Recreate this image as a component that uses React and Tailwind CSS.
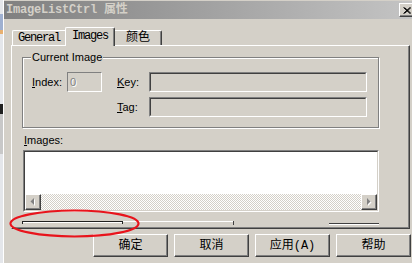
import React from 'react';

const ui = "font-['Liberation_Sans','Noto_Sans_CJK_SC',sans-serif]";
const mono = "font-['Liberation_Mono','Noto_Sans_CJK_SC',monospace]";

const Raised = ({ className = '', children }) => (
  <div className={`border border-t-white border-l-white border-r-[#404040] border-b-[#404040] shadow-[inset_-1px_-1px_0_#808080] ${className}`}>
    {children}
  </div>
);

const Sunken = ({ className = '', inner = 'bg-[#d4d0c8]', children }) => (
  <div className={`border border-t-[#808080] border-l-[#808080] border-r-white border-b-white ${className}`}>
    <div className={`h-full w-full border border-t-[#404040] border-l-[#404040] border-r-[#d4d0c8] border-b-[#d4d0c8] ${inner}`}>
      {children}
    </div>
  </div>
);

const Arrow = ({ dir }) => (
  <Raised className="w-[16px] h-[16px] bg-[#d4d0c8] flex items-center justify-center">
    <svg width="8" height="8" viewBox="0 0 8 8">
      {dir === 'left' ? (
        <>
          <polygon points="6,1 6,8 2.5,4.5" fill="#ffffff" />
          <polygon points="5,0 5,7 1.5,3.5" fill="#808080" />
        </>
      ) : (
        <>
          <polygon points="3,1 3,8 6.5,4.5" fill="#ffffff" />
          <polygon points="2,0 2,7 5.5,3.5" fill="#808080" />
        </>
      )}
    </svg>
  </Raised>
);

const Btn = ({ children }) => (
  <Raised className={`w-[75px] h-[23px] bg-[#d4d0c8] flex items-center justify-center text-[12px] text-black ${mono}`}>
    {children}
  </Raised>
);

const App = () => {
  return (
    <div className={`relative w-[412px] h-[263px] overflow-hidden bg-[#d4d0c8] flex ${ui}`}>
      {/* desktop behind the window */}
      <div className="w-[3px] h-full flex flex-col bg-[#e4e6ea]">
        <div className="h-[14px]" />
        <div className="h-[16px] bg-[#9fb0d0]" />
        <div className="h-[4px] bg-[#e8b070]" />
        <div className="h-[70px]" />
        <div className="h-[10px] bg-[#202020]" />
        <div className="h-[40px] bg-[#c8c8c8]" />
      </div>

      <div className="flex-1 flex flex-col border-l border-l-white">
        {/* title bar */}
        <div className="mt-[1px] h-[18px] flex items-center justify-between bg-gradient-to-r from-[#808080] to-[#c4c4c4]">
          <span className={`pl-[2px] text-[12px] font-bold text-[#d4d0c8] tracking-[-0.2px] ${mono}`}>
            ImageListCtrl 属性
          </span>
          <Raised className="w-[16px] h-[14px] bg-[#d4d0c8] flex items-center justify-center -mr-[3px]">
            <svg width="8" height="7" viewBox="0 0 8 7">
              <path d="M0.5 0.5 L7 6.5 M1.5 0.5 L8 6.5 M7 0.5 L0.5 6.5 M8 0.5 L1.5 6.5" stroke="#000" strokeWidth="1" />
            </svg>
          </Raised>
        </div>

        {/* tabs */}
        <div className="mt-[8px] h-[18px] pl-[8px] flex items-end">
          <div className={`w-[53px] h-[15px] border-t border-l border-t-white border-l-white rounded-tl-[2px] flex items-center justify-center text-[12px] tracking-[-1.2px] ${mono}`}>
            General
          </div>
          <div className={`relative z-10 -mb-[1px] w-[50px] h-[19px] bg-[#d4d0c8] border-t border-l border-r border-t-white border-l-white border-r-[#404040] shadow-[inset_-1px_0_0_#808080] rounded-t-[2px] flex items-center justify-center pb-[2px] text-[12px] tracking-[-1.2px] ${mono}`}>
            Images
          </div>
          <div className={`w-[47px] h-[15px] border-t border-r border-t-white border-r-[#404040] shadow-[inset_-1px_0_0_#808080] rounded-tr-[2px] flex items-center justify-center text-[12px] ${mono}`}>
            颜色
          </div>
        </div>

        {/* tab page */}
        <div className="ml-[7px] w-[399px] h-[184px] flex flex-col border border-t-white border-l-white border-r-[#404040] border-b-[#404040] shadow-[inset_-1px_-1px_0_#808080] pl-[10px] pt-[11px]">
          {/* group box */}
          <div className="relative w-[357px] h-[71px] border border-[#808080] shadow-[inset_1px_1px_0_#fff,1px_1px_0_#fff] shrink-0">
            <span className="absolute left-[8px] -top-[7px] bg-[#d4d0c8] px-[1px] text-[11px] leading-[13px] text-black">
              Current Image
            </span>
            <div className="flex flex-col gap-[5px] pl-[9px] pt-[14px]">
              <div className="flex items-center h-[20px]">
                <span className="w-[35px] text-[11px] text-black"><u>I</u>ndex:</span>
                <div className="w-[35px] h-[20px] border border-t-[#808080] border-l-[#808080] border-r-white border-b-white flex items-center pl-[2px] text-[11px] text-[#808080] [text-shadow:1px_1px_0_#fff]">
                  0
                </div>
                <span className="ml-[15px] w-[32px] text-[11px] text-black"><u>K</u>ey:</span>
                <Sunken className="w-[218px] h-[20px]" />
              </div>
              <div className="flex items-center h-[20px]">
                <span className="ml-[85px] w-[32px] text-[11px] text-black"><u>T</u>ag:</span>
                <Sunken className="w-[218px] h-[20px]" />
              </div>
            </div>
          </div>

          <span className="mt-[6px] ml-[2px] text-[11px] leading-[13px] text-black"><u>I</u>mages:</span>

          {/* list box */}
          <Sunken className="mt-[3px] ml-[1px] w-[356px] h-[62px] shrink-0" inner="bg-white flex flex-col justify-end">
            <div className="flex h-[16px]">
              <Arrow dir="left" />
              <div className="flex-1 bg-[image:repeating-conic-gradient(#d4d0c8_0_25%,#ffffff_0_50%)] bg-[length:2px_2px]" />
              <Arrow dir="right" />
            </div>
          </Sunken>

          {/* stray slider lines */}
          <div className="mt-[9px] h-[5px] flex items-start">
            <div className="w-[101px] h-[3px] border-l border-r border-l-[#202020] border-r-[#202020] flex flex-col">
              <div className="h-[1px] bg-[#202020]" />
              <div className="h-[1px] bg-white" />
            </div>
            <div className="w-[110px] h-[1px] bg-white" />
            <div className="w-[1px] h-[4px] bg-[#404040]" />
            <div className="w-[95px]" />
            <div className="mt-[2px] w-[50px] flex flex-col">
              <div className="h-[1px] bg-[#404040]" />
              <div className="h-[1px] bg-white" />
            </div>
          </div>
        </div>

        {/* buttons */}
        <div className="mt-[5px] ml-[89px] flex gap-[6px]">
          <Btn>确定</Btn>
          <Btn>取消</Btn>
          <Btn>应用(A)</Btn>
          <Btn>帮助</Btn>
        </div>
      </div>

      {/* red annotation ellipse */}
      <svg className="absolute left-[9px] top-[209px]" width="131" height="29" viewBox="0 0 131 29">
        <ellipse cx="65.5" cy="14.5" rx="64" ry="13" fill="none" stroke="#e8141c" strokeWidth="2.2" />
      </svg>
    </div>
  );
};

export default App;
